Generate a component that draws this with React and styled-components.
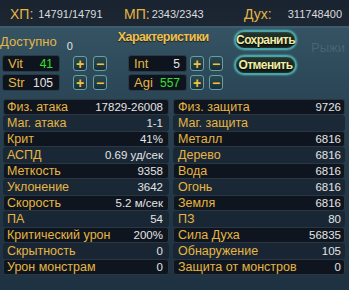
import React from 'react';
import styled, { createGlobalStyle } from 'styled-components';

const GlobalStyle = createGlobalStyle`
    html, body {
        margin: 0;
        padding: 0;
        background: #1b2431;
    }
    body {
        font-family: "Liberation Sans", Arial, sans-serif;
    }
`;

const Frame = styled.div`
    position: relative;
    width: 349px;
    height: 290px;
    overflow: hidden;
    background: linear-gradient(180deg, #3a5868 0px, #2f4d5d 60px, #28404f 130px, #213645 220px, #1f3241 290px);
`;

const TopBar = styled.div`
    display: flex;
    align-items: center;
    height: 28px;
    padding-left: 10px;
    background: linear-gradient(180deg, #1a2330, #1d2734);
    border-bottom: 2px solid #3e5c6b;
    box-sizing: border-box;
`;

const Pair = styled.div`
    display: flex;
    align-items: center;
    gap: ${(p) => p.$gap || 5}px;
    width: ${(p) => (p.$width ? `${p.$width}px` : 'auto')};
    flex: ${(p) => (p.$grow ? 1 : 'none')};
    justify-content: ${(p) => (p.$spread ? 'space-between' : 'flex-start')};
    padding-right: ${(p) => (p.$spread ? 7 : 0)}px;
    padding-top: 2px;
`;

const TopLabel = styled.span`
    color: #e6b543;
    font-size: 14px;
`;

const TopValue = styled.span`
    color: #d9dbdc;
    font-size: 11px;
`;

const Ghost = styled.span`
    position: absolute;
    color: rgba(120, 140, 155, 0.35);
    font-size: 13px;
    top: 12px;
    left: 311px;
    white-space: nowrap;
`;

const Header = styled.div`
    display: flex;
    height: 70px;
    position: relative;
`;

const LeftPane = styled.div`
    width: 234px;
    display: flex;
    flex-direction: column;
`;

const TitleRow = styled.div`
    display: flex;
    height: 26px;
    align-items: flex-start;
`;

const Available = styled.span`
    color: #e6b543;
    font-size: 13px;
    margin-top: 6px;
`;

const Zero = styled.span`
    color: #e4e4e4;
    font-size: 11px;
    margin-top: 12px;
    margin-left: 10px;
`;

const Title = styled.span`
    color: #f1bf4a;
    font-size: 12.5px;
    font-weight: bold;
    letter-spacing: -0.6px;
    margin-top: 2px;
    margin-left: 45px;
    text-shadow: 0 1px 1px rgba(0, 0, 0, 0.6);
`;

const AttrGrid = styled.div`
    display: grid;
    grid-template-columns: 71px 20px 35px 62px 19px 14px;
    grid-auto-rows: 17px;
    row-gap: 2px;
    padding-left: 2px;
    margin-top: 1px;
`;

const AttrBox = styled.div`
    width: ${(p) => p.$width}px;
    box-sizing: border-box;
    display: flex;
    align-items: center;
    justify-content: space-between;
    padding: 0 6px 0 5px;
    background: #0e141d;
    border: 1px solid #2c3947;
    border-radius: 3px;
`;

const AttrName = styled.span`
    color: #e6b543;
    font-size: 13px;
`;

const AttrValue = styled.span`
    color: ${(p) => (p.$green ? '#38e02a' : '#e4e4e4')};
    font-size: 12px;
`;

const SmallBtn = styled.div`
    width: 14px;
    height: 15px;
    margin-top: 1px;
    box-sizing: border-box;
    border: 1px solid #6a9ea2;
    border-radius: 3px;
    background: linear-gradient(180deg, #2a4a52, #16303a);
    display: flex;
    align-items: center;
    justify-content: center;
    color: #f2c23c;
    font-size: 14px;
    font-weight: bold;
    line-height: 1;
`;

const RightPane = styled.div`
    display: flex;
    flex-direction: column;
    gap: 5px;
    padding-top: 2px;
`;

const ActionBtn = styled.div`
    width: 63px;
    height: 20px;
    box-sizing: border-box;
    border: 2px solid #4aa3a6;
    border-radius: 10px;
    background: linear-gradient(180deg, #24352c, #0f1a16);
    box-shadow: 0 0 2px #5fc6c6, inset 0 0 2px rgba(90, 200, 200, 0.5);
    display: flex;
    align-items: center;
    justify-content: center;
    color: #f3eca6;
    font-size: 12px;
    font-weight: bold;
    letter-spacing: -0.6px;
    text-shadow: 0 1px 1px #000;
`;

const Stats = styled.div`
    display: grid;
    grid-template-columns: 166px 172px;
    column-gap: 4px;
    padding-left: 3px;
    margin-top: 1px;
`;

const Column = styled.div`
    display: flex;
    flex-direction: column;
`;

const Row = styled.div`
    display: flex;
    align-items: center;
    justify-content: space-between;
    height: 16px;
    box-sizing: border-box;
    padding: 0 ${(p) => p.$pr}px 0 ${(p) => p.$pl}px;
    background: ${(p) => (p.$dark ? '#0f151e' : 'rgba(22, 32, 44, 0.72)')};
    border: 1px solid ${(p) => (p.$dark ? '#2a3644' : 'transparent')};
    border-radius: 3px;
`;

const Label = styled.span`
    color: #e6b543;
    font-size: 12.5px;
    white-space: nowrap;
`;

const Value = styled.span`
    color: #e2e4e6;
    font-size: 11.5px;
    white-space: nowrap;
`;

const leftStats = [
    ['Физ. атака', '17829-26008'],
    ['Маг. атака', '1-1'],
    ['Крит', '41%'],
    ['АСПД', '0.69 уд/сек'],
    ['Меткость', '9358'],
    ['Уклонение', '3642'],
    ['Скорость', '5.2 м/сек'],
    ['ПА', '54'],
    ['Критический урон', '200%'],
    ['Скрытность', '0'],
    ['Урон монстрам', '0'],
];

const rightStats = [
    ['Физ. защита', '9726'],
    ['Маг. защита', ''],
    ['Металл', '6816'],
    ['Дерево', '6816'],
    ['Вода', '6816'],
    ['Огонь', '6816'],
    ['Земля', '6816'],
    ['ПЗ', '80'],
    ['Сила Духа', '56835'],
    ['Обнаружение', '105'],
    ['Защита от монстров', '0'],
];

const attrs = [
    ['Vit', '41', true, 'Int', '5', false],
    ['Str', '105', false, 'Agi', '557', true],
];

const StatColumn = ({ items, pl, pr }) => (
    <Column>
        {items.map(([label, value], i) => (
            <Row key={label} $dark={i % 2 === 0} $pl={pl} $pr={pr}>
                <Label>{label}</Label>
                <Value>{value}</Value>
            </Row>
        ))}
    </Column>
);

const App = () => {
    return (
        <>
            <GlobalStyle />
            <Frame>
                <TopBar>
                    <Pair $width={114}>
                        <TopLabel>ХП:</TopLabel>
                        <TopValue>14791/14791</TopValue>
                    </Pair>
                    <Pair $width={120} $gap={2}>
                        <TopLabel>МП:</TopLabel>
                        <TopValue>2343/2343</TopValue>
                    </Pair>
                    <Pair $grow $spread>
                        <TopLabel>Дух:</TopLabel>
                        <TopValue>311748400</TopValue>
                    </Pair>
                </TopBar>
                <Header>
                    <Ghost>Рыжи</Ghost>
                    <LeftPane>
                        <TitleRow>
                            <Available>Доступно</Available>
                            <Zero>0</Zero>
                            <Title>Характеристики</Title>
                        </TitleRow>
                        <AttrGrid>
                            {attrs.map(([a, av, ag, b, bv, bg]) => (
                                <React.Fragment key={a}>
                                    <AttrBox $width={58}>
                                        <AttrName>{a}</AttrName>
                                        <AttrValue $green={ag}>{av}</AttrValue>
                                    </AttrBox>
                                    <SmallBtn>+</SmallBtn>
                                    <SmallBtn>−</SmallBtn>
                                    <AttrBox $width={59}>
                                        <AttrName>{b}</AttrName>
                                        <AttrValue $green={bg}>{bv}</AttrValue>
                                    </AttrBox>
                                    <SmallBtn>+</SmallBtn>
                                    <SmallBtn>−</SmallBtn>
                                </React.Fragment>
                            ))}
                        </AttrGrid>
                    </LeftPane>
                    <RightPane>
                        <ActionBtn>Сохранить</ActionBtn>
                        <ActionBtn>Отменить</ActionBtn>
                    </RightPane>
                </Header>
                <Stats>
                    <StatColumn items={leftStats} pl={3} pr={5} />
                    <StatColumn items={rightStats} pl={4} pr={3} />
                </Stats>
            </Frame>
        </>
    );
};

export default App;
